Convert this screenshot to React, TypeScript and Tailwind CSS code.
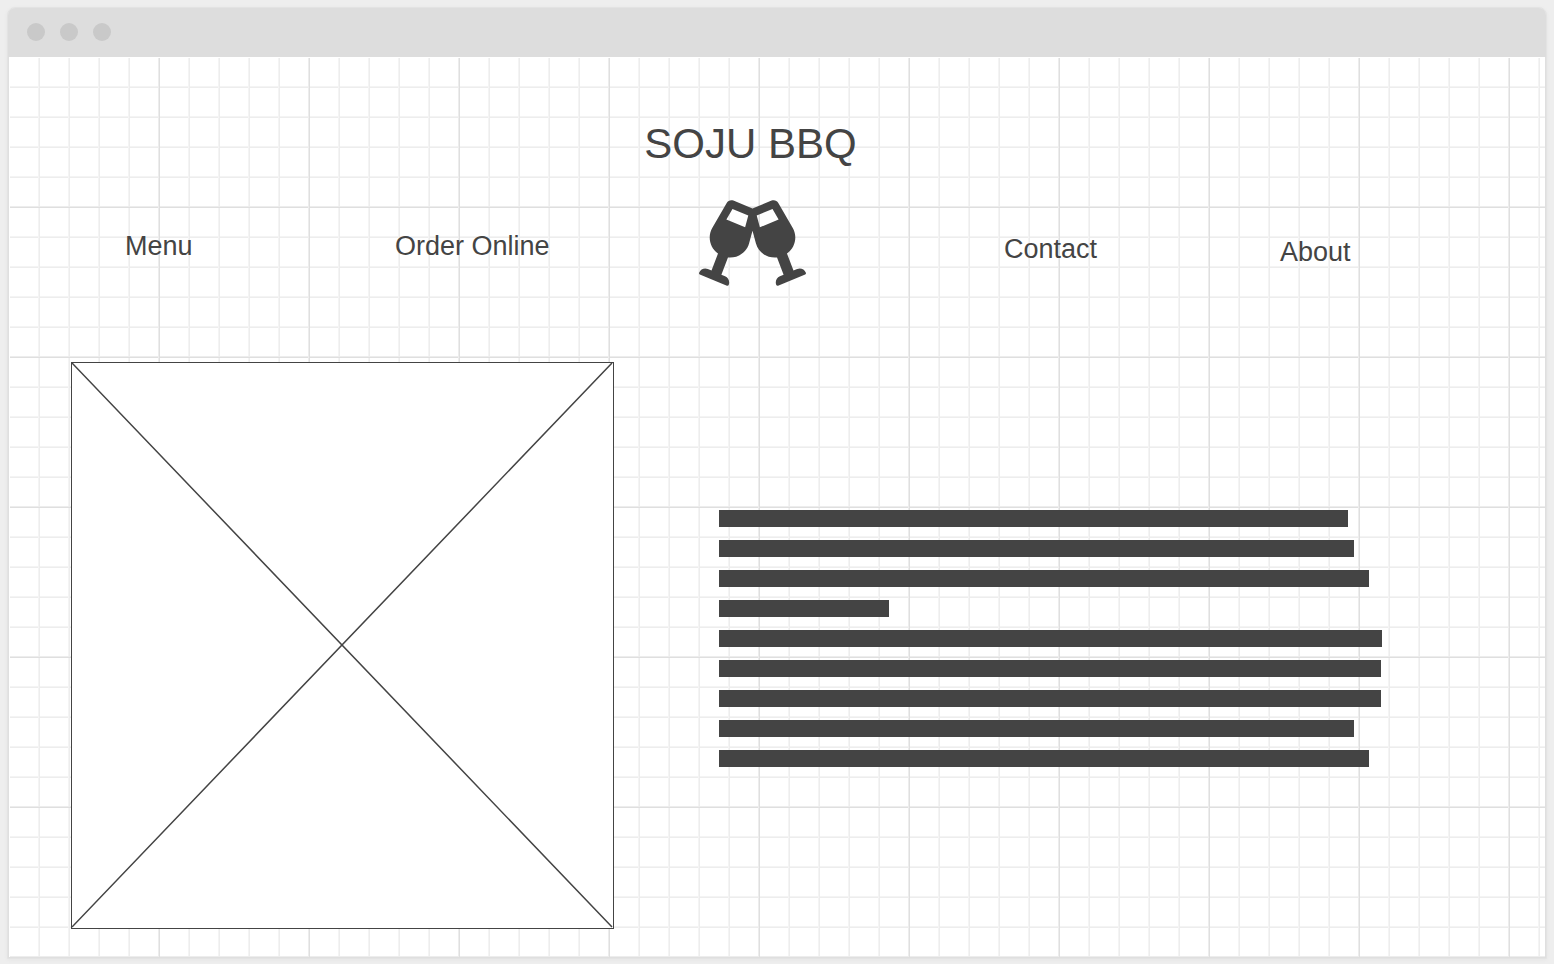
import React from "react";
import { FaGlassCheers } from "react-icons/fa";

const PARAGRAPH_WIDTH = 663;
const lines = [629, 635, 650, 170, 663, 662, 662, 635, 650];

function TitleBar() {
  return (
    <div className="flex h-[49px] items-center gap-[15px] rounded-t-[7px] bg-[#dddddd] pb-px pl-[19px]">
      {[0, 1, 2].map((dot) => (
        <span key={dot} className="size-[18px] rounded-full bg-[#c9c9c9]" />
      ))}
    </div>
  );
}

function ImagePlaceholder() {
  return (
    <div role="img" aria-label="Image placeholder" className="aspect-[543/567] border border-[#444444] bg-white">
      <svg
        className="block size-full"
        viewBox="0 0 541 565"
        preserveAspectRatio="none"
        stroke="#444444"
        strokeWidth="1.5"
      >
        <path d="M0 0 L540 564 M540 0 L0 564" />
      </svg>
    </div>
  );
}

function TextPlaceholder() {
  return (
    <div className="flex flex-col gap-[13px] pt-[148px]">
      {lines.map((width, index) => (
        <div
          key={index}
          className="h-[17px] bg-[#444444]"
          style={{ width: `${(width / PARAGRAPH_WIDTH) * 100}%` }}
        />
      ))}
    </div>
  );
}

export default function App() {
  return (
    <div className="min-h-screen bg-[#eeeeee] px-[7px] pt-[7px] pb-[5px] font-['Liberation_Sans',Arial,sans-serif] text-[#444444]">
      <div className="rounded-t-[8px] border border-[#e3e3e3] shadow-[0_1px_4px_rgba(0,0,0,0.04)]">
        <TitleBar />
        <div className="border-x border-b border-[#dfdfdf] bg-white pt-px pl-px">
          <div className="bg-[linear-gradient(to_right,transparent_148px,#ededed_148px,#ededed_149px,#dfdfdf_149px),linear-gradient(to_bottom,transparent_148px,#ededed_148px,#ededed_149px,#dfdfdf_149px),linear-gradient(to_right,transparent_28px,#f4f4f4_28px,#f4f4f4_29px,#ededed_29px),linear-gradient(to_bottom,transparent_28px,#f4f4f4_28px,#f4f4f4_29px,#ededed_29px)] bg-[size:150px_150px,150px_150px,30px_30px,30px_30px] pb-7">
            <header className="pt-[62px]">
              <h1 className="pr-[54px] text-center text-[42px] leading-[48px]">SOJU BBQ</h1>
              <nav className="mt-8 grid h-[86px] grid-cols-[270fr_304fr_305fr_276fr_265fr] items-center pl-[115px] text-[27px] leading-8">
                <a href="#menu" className="pt-1.5">Menu</a>
                <a href="#order" className="pt-1.5">Order Online</a>
                <a href="#home" aria-label="Home">
                  <FaGlassCheers className="block h-[86px] w-[107px]" />
                </a>
                <a href="#contact" className="pt-3">Contact</a>
                <a href="#about" className="pt-[18px]">About</a>
              </nav>
            </header>
            <main className="mt-[76px] grid grid-cols-[543fr_663fr] items-start gap-x-[105px] pr-[163px] pl-[61px]">
              <ImagePlaceholder />
              <TextPlaceholder />
            </main>
          </div>
        </div>
      </div>
    </div>
  );
}
